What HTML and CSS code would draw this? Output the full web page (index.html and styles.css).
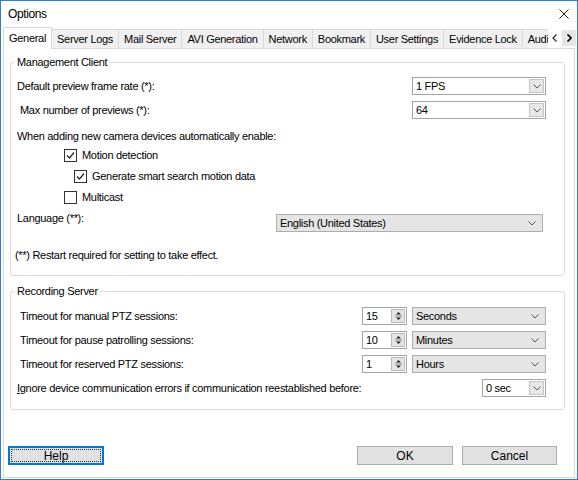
FILE: index.html
```html
<!DOCTYPE html>
<html lang="en">
<head>
    <meta charset="UTF-8">
    <meta name="viewport" content="width=device-width, initial-scale=1.0">
    <title>Options</title>
    <link rel="stylesheet" href="styles.css">
</head>
<body>
    <div class="window">
        <div class="titlebar">
            <span class="title">Options</span>
            <svg class="close" width="10" height="10" viewBox="0 0 10 10">
                <path d="M0.5 0.5L9.5 9.5M9.5 0.5L0.5 9.5" stroke="#1a1a1a" stroke-width="1"/>
            </svg>
        </div>

        <div class="tabbar">
            <div class="tabs">
                <div class="tab active">General</div>
                <div class="tab">Server Logs</div>
                <div class="tab">Mail Server</div>
                <div class="tab">AVI Generation</div>
                <div class="tab">Network</div>
                <div class="tab">Bookmark</div>
                <div class="tab">User Settings</div>
                <div class="tab">Evidence Lock</div>
                <div class="tab">Audio</div>
            </div>
            <div class="tab-scroll">
                <span class="scroll-btn">
                    <svg width="6" height="8" viewBox="0 0 6 8"><path d="M4.5 0.5L1 4L4.5 7.5" fill="none" stroke="#333" stroke-width="1.3"/></svg>
                </span>
                <span class="scroll-btn hot">
                    <svg width="6" height="8" viewBox="0 0 6 8"><path d="M1.5 0.5L5 4L1.5 7.5" fill="none" stroke="#000" stroke-width="1.6"/></svg>
                </span>
            </div>
        </div>

        <div class="panel">
            <fieldset class="group group-client">
                <legend>Management Client</legend>

                <div class="row row-first">
                    <span class="label">Default preview frame rate (*):</span>
                    <div class="combo combo-list">
                        <span class="value">1 FPS</span>
                        <span class="drop-btn">
                            <svg width="8" height="5" viewBox="0 0 8 5"><path d="M0.5 0.5L4 4L7.5 0.5" fill="none" stroke="#555" stroke-width="1"/></svg>
                        </span>
                    </div>
                </div>

                <div class="row">
                    <span class="label indent">Max number of previews (*):</span>
                    <div class="combo combo-list">
                        <span class="value">64</span>
                        <span class="drop-btn">
                            <svg width="8" height="5" viewBox="0 0 8 5"><path d="M0.5 0.5L4 4L7.5 0.5" fill="none" stroke="#555" stroke-width="1"/></svg>
                        </span>
                    </div>
                </div>

                <div class="text-line">When adding new camera devices automatically enable:</div>

                <label class="check check-first">
                    <span class="box">
                        <svg width="11" height="11" viewBox="0 0 11 11"><path d="M2 5.5L4.5 8L9 2.5" fill="none" stroke="#222" stroke-width="1.2"/></svg>
                    </span>
                    Motion detection
                </label>
                <label class="check sub">
                    <span class="box">
                        <svg width="11" height="11" viewBox="0 0 11 11"><path d="M2 5.5L4.5 8L9 2.5" fill="none" stroke="#222" stroke-width="1.2"/></svg>
                    </span>
                    Generate smart search motion data
                </label>
                <label class="check">
                    <span class="box"></span>
                    Multicast
                </label>

                <div class="row row-lang">
                    <span class="label">Language (**):</span>
                    <div class="combo combo-flat combo-lang">
                        <span class="value">English (United States)</span>
                        <svg class="chevron" width="8" height="5" viewBox="0 0 8 5"><path d="M0.5 0.5L4 4L7.5 0.5" fill="none" stroke="#555" stroke-width="1"/></svg>
                    </div>
                </div>

                <div class="note">(**) Restart required for setting to take effect.</div>
            </fieldset>

            <fieldset class="group group-server">
                <legend>Recording Server</legend>

                <div class="row row-first">
                    <span class="label indent">Timeout for manual PTZ sessions:</span>
                    <div class="numeric">
                        <span class="value">15</span>
                        <span class="spin">
                            <svg width="7" height="10" viewBox="0 0 7 10"><path d="M3.5 1L6 3.5H1Z M1 6.5H6L3.5 9Z" fill="#222"/><path d="M0 5H7" stroke="#888"/></svg>
                        </span>
                    </div>
                    <div class="combo combo-flat combo-unit">
                        <span class="value">Seconds</span>
                        <svg class="chevron" width="8" height="5" viewBox="0 0 8 5"><path d="M0.5 0.5L4 4L7.5 0.5" fill="none" stroke="#555" stroke-width="1"/></svg>
                    </div>
                </div>

                <div class="row">
                    <span class="label indent">Timeout for pause patrolling sessions:</span>
                    <div class="numeric">
                        <span class="value">10</span>
                        <span class="spin">
                            <svg width="7" height="10" viewBox="0 0 7 10"><path d="M3.5 1L6 3.5H1Z M1 6.5H6L3.5 9Z" fill="#222"/><path d="M0 5H7" stroke="#888"/></svg>
                        </span>
                    </div>
                    <div class="combo combo-flat combo-unit">
                        <span class="value">Minutes</span>
                        <svg class="chevron" width="8" height="5" viewBox="0 0 8 5"><path d="M0.5 0.5L4 4L7.5 0.5" fill="none" stroke="#555" stroke-width="1"/></svg>
                    </div>
                </div>

                <div class="row">
                    <span class="label indent">Timeout for reserved PTZ sessions:</span>
                    <div class="numeric">
                        <span class="value">1</span>
                        <span class="spin">
                            <svg width="7" height="10" viewBox="0 0 7 10"><path d="M3.5 1L6 3.5H1Z M1 6.5H6L3.5 9Z" fill="#222"/><path d="M0 5H7" stroke="#888"/></svg>
                        </span>
                    </div>
                    <div class="combo combo-flat combo-unit">
                        <span class="value">Hours</span>
                        <svg class="chevron" width="8" height="5" viewBox="0 0 8 5"><path d="M0.5 0.5L4 4L7.5 0.5" fill="none" stroke="#555" stroke-width="1"/></svg>
                    </div>
                </div>

                <div class="row">
                    <span class="label"><u>I</u>gnore device communication errors if communication reestablished before:</span>
                    <div class="combo combo-list combo-small">
                        <span class="value">0 sec</span>
                        <span class="drop-btn">
                            <svg width="8" height="5" viewBox="0 0 8 5"><path d="M0.5 0.5L4 4L7.5 0.5" fill="none" stroke="#555" stroke-width="1"/></svg>
                        </span>
                    </div>
                </div>
            </fieldset>

            <div class="buttons">
                <button class="btn btn-focus"><span>Help</span></button>
                <span class="spacer"></span>
                <button class="btn">OK</button>
                <button class="btn">Cancel</button>
            </div>
        </div>
    </div>
</body>
</html>
```

FILE: styles.css
```css
* {
    box-sizing: border-box;
}

body {
    margin: 0;
    font-family: "Liberation Sans", Arial, sans-serif;
    font-size: 11px;
    letter-spacing: -0.3px;
    color: #000;
    background: #fff;
}

.window {
    width: 578px;
    height: 480px;
    border: 1px solid #2b7fcc;
    display: flex;
    flex-direction: column;
    background: #fff;
}

/* title bar */
.titlebar {
    height: 26px;
    flex: none;
    display: flex;
    align-items: center;
    justify-content: space-between;
    padding: 0 8px 0 7px;
}

.title {
    font-size: 12px;
    letter-spacing: -0.4px;
}

/* tabs */
.tabbar {
    height: 22px;
    flex: none;
    display: flex;
    margin-left: 2px;
    position: relative;
    z-index: 1;
}

.tabs {
    flex: 1;
    display: flex;
    align-items: flex-end;
    overflow: hidden;
    min-width: 0;
}

.tab {
    flex: none;
    height: 19px;
    margin-bottom: 1px;
    margin-left: -1px;
    padding: 0 5px;
    display: flex;
    align-items: center;
    background: #f0f0f0;
    border: 1px solid #d9d9d9;
    border-bottom: none;
    white-space: nowrap;
}

.tab:first-child {
    margin-left: 0;
}

.tab.active {
    height: 22px;
    margin-bottom: 0;
    padding: 0 5px 2px 5px;
    background: #fff;
    position: relative;
    z-index: 1;
}

.tab-scroll {
    flex: none;
    width: 28px;
    height: 16px;
    margin: 3px 1px 0 0;
    display: flex;
}

.scroll-btn {
    width: 14px;
    height: 16px;
    display: flex;
    align-items: center;
    justify-content: center;
}

.scroll-btn.hot {
    background: #e6e6e6;
}

/* tab page */
.panel {
    flex: 1;
    margin: -1px 2px 1px;
    border: 1px solid #d9d9d9;
    display: flex;
    flex-direction: column;
}

.group {
    margin: 7px 9px 0 6px;
    padding: 0 18px 13px 6px;
    border: 1px solid #dcdcdc;
    border-radius: 3px;
    min-width: 0;
}

.group legend {
    padding: 0 2px;
    margin-left: -2px;
    line-height: 13px;
}

.group-server {
    margin-top: 9px;
    padding-bottom: 12px;
}

.row {
    height: 18px;
    margin-top: 6px;
    display: flex;
    align-items: center;
    white-space: nowrap;
}

.row-first {
    margin-top: 8px;
}

.group-server .row-first {
    margin-top: 9px;
}

.label.indent {
    padding-left: 3px;
}

.text-line {
    margin-top: 10px;
    line-height: 14px;
}

.check {
    height: 14px;
    margin-top: 7px;
    padding-left: 47px;
    display: flex;
    align-items: center;
    gap: 5px;
}

.check-first {
    margin-top: 5px;
}

.check.sub {
    padding-left: 57px;
}

.box {
    width: 13px;
    height: 13px;
    border: 1px solid #333;
    background: #fff;
    display: flex;
    align-items: center;
    justify-content: center;
}

.row-lang {
    height: 21px;
    margin-top: 7px;
    align-items: flex-start;
}

.row-lang .label {
    line-height: 14px;
}

.note {
    margin: 16px 0 0 -2px;
    line-height: 14px;
}

/* combo boxes */
.combo {
    height: 18px;
    margin-left: auto;
    display: flex;
    align-items: center;
    padding-left: 3px;
}

.combo .value {
    flex: 1;
}

.combo-list {
    width: 134px;
    border: 1px solid #a6a6a6;
    background: #fff;
    padding-right: 1px;
}

.drop-btn {
    width: 15px;
    height: 14px;
    border: 1px solid #c4c4c4;
    background: #e8e8e8;
    display: flex;
    align-items: center;
    justify-content: center;
}

.combo-small {
    width: 64px;
}

.combo-flat {
    background: #e5e5e5;
    border: 1px solid #adadad;
    padding: 0 6px 0 3px;
}

.combo-lang {
    width: 267px;
    height: 18px;
    margin-top: 3px;
    margin-right: 3px;
}

.combo-unit {
    width: 134px;
    margin-left: 5px;
}

/* numeric up/down */
.numeric {
    width: 45px;
    height: 18px;
    margin-left: auto;
    border: 1px solid #a6a6a6;
    display: flex;
    align-items: center;
    padding: 1px 1px 1px 3px;
}

.numeric .value {
    flex: 1;
}

.spin {
    width: 14px;
    height: 14px;
    border: 1px solid #bdbdbd;
    background: #e5e5e5;
    display: flex;
    align-items: center;
    justify-content: center;
}

/* dialog buttons */
.buttons {
    margin-top: 36px;
    padding: 0 17px 0 4px;
    display: flex;
    gap: 9px;
}

.spacer {
    flex: 1;
}

.btn {
    width: 96px;
    height: 19px;
    border: 1px solid #adadad;
    background: #e1e1e1;
    font-family: "Liberation Sans", Arial, sans-serif;
    font-size: 12px;
    letter-spacing: 0;
    color: #000;
    padding: 0;
}

.btn:last-child {
    width: 95px;
}

.btn-focus {
    border: 2px solid #0078d7;
    padding: 1px;
}

.btn-focus span {
    display: flex;
    align-items: center;
    justify-content: center;
    height: 100%;
    border: 1px dotted #333;
}
```
